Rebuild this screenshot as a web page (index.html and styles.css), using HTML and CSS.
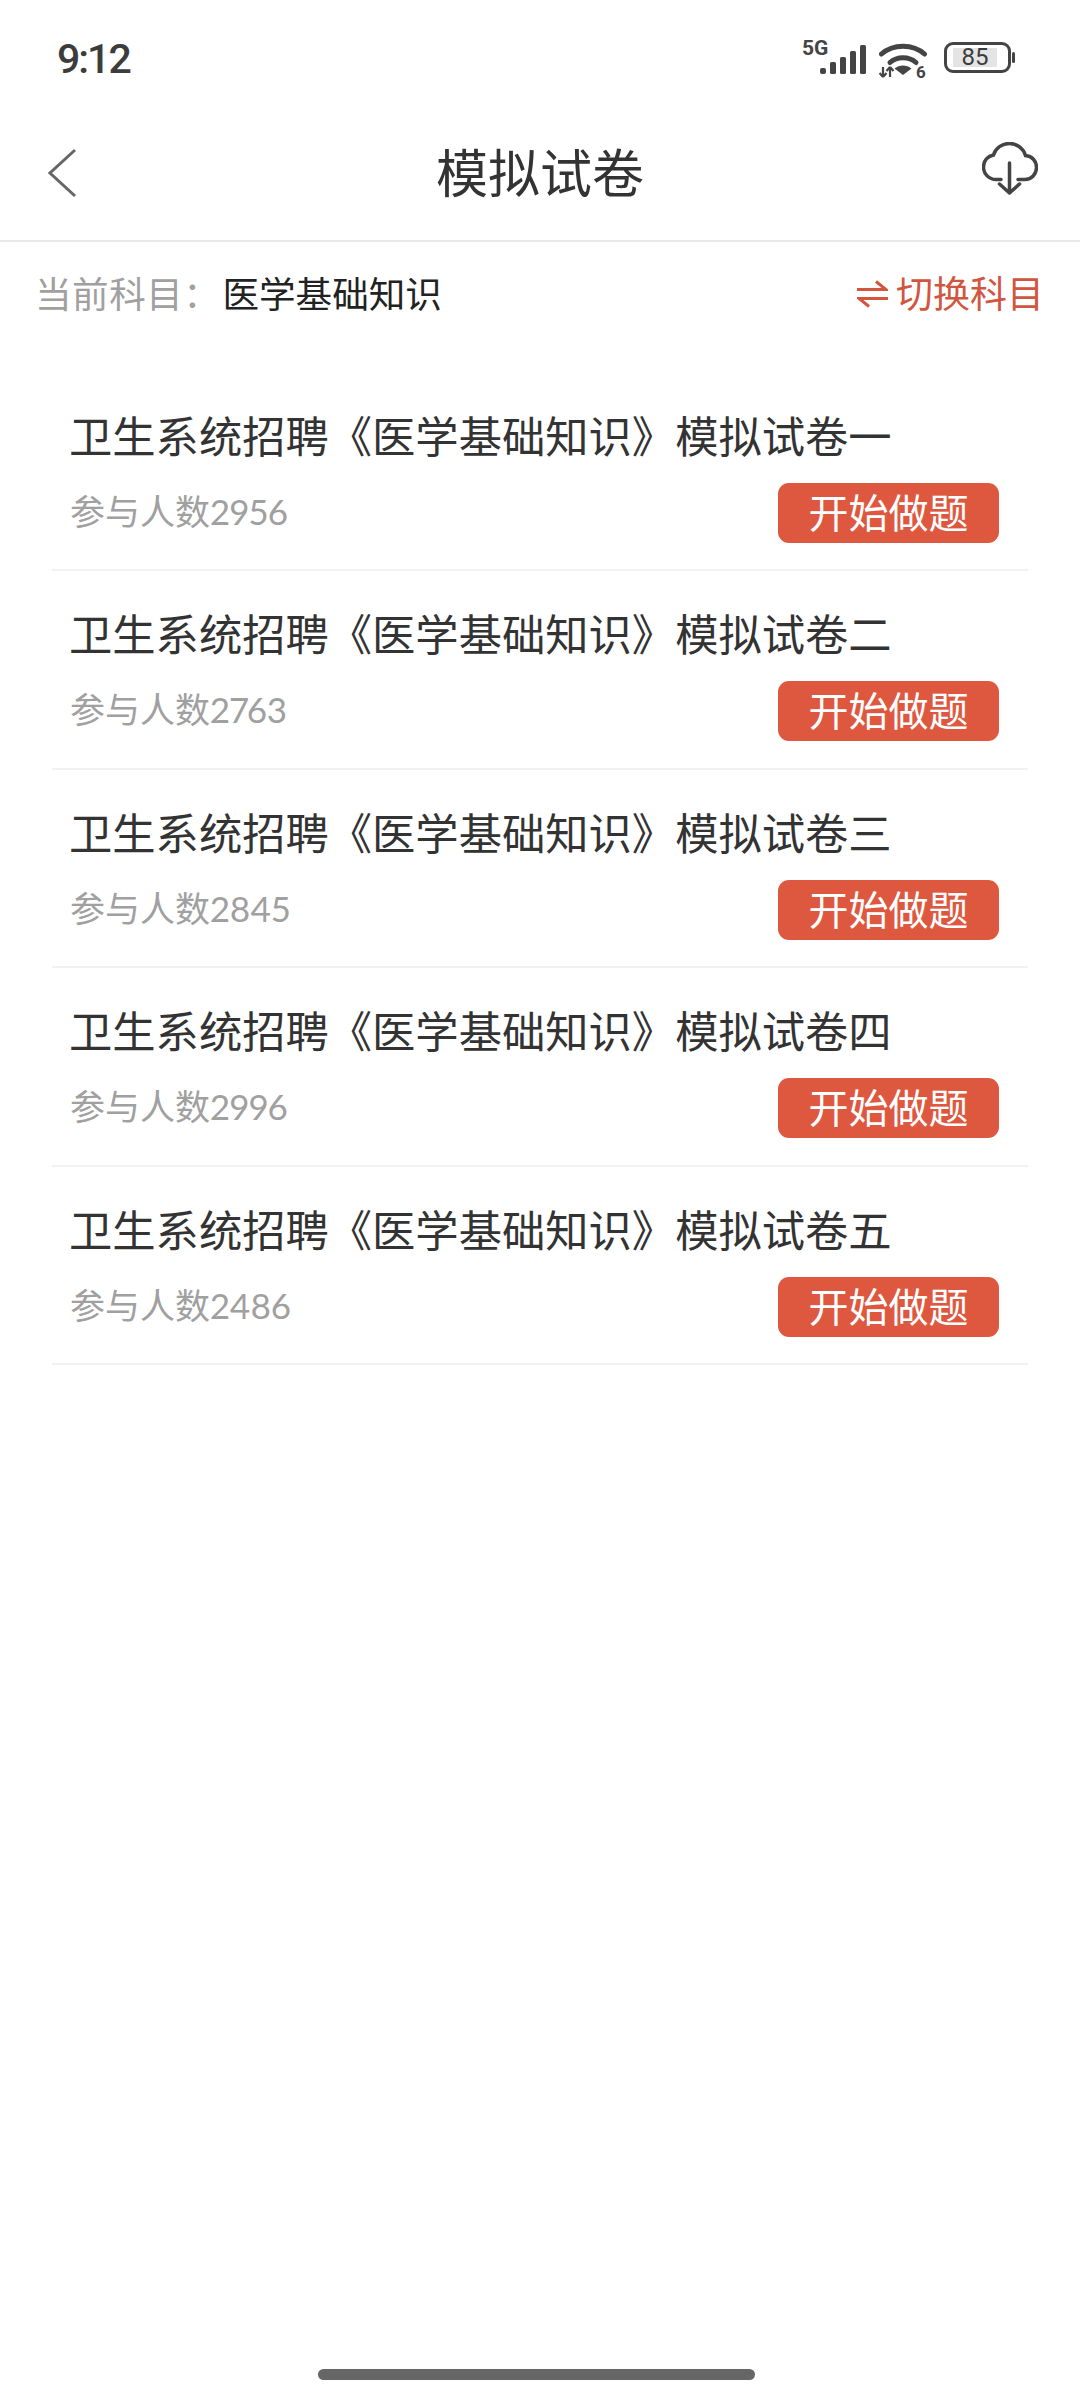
FILE: index.html
```html
<!DOCTYPE html>
<html lang="zh-CN">
<head>
<meta charset="utf-8">
<title>模拟试卷</title>
<link rel="stylesheet" href="styles.css">
</head>
<body>
<div class="page">
  <div class="status">
    <span class="time">9:12</span>
    <div class="status-icons">
      <div class="signal">
        <span class="net">5G</span>
        <svg class="bars" width="46" height="29" viewBox="0 0 46 29"><rect x="0" y="23" width="6" height="6" rx="2"/><rect x="10" y="17" width="6" height="12" rx="1.5"/><rect x="20" y="12" width="6" height="17" rx="1.5"/><rect x="30" y="6" width="6" height="23" rx="1.5"/><rect x="40" y="0" width="6" height="29" rx="1.5"/></svg>
      </div>
      <svg class="wifi" width="50" height="42" viewBox="0 0 50 42"><path d="M2.500 12C14 1.500 34 1.500 45.500 12" fill="none" stroke="#444" stroke-width="5" stroke-linecap="round"/><path d="M11 20.500C18 14 30 14 37 20.500" fill="none" stroke="#444" stroke-width="5" stroke-linecap="round"/><path d="M24 33L15.500 26.500C20.500 22.500 27.500 22.500 32.500 26.500Z" fill="#444"/><path d="M4 25V34M4 35L0.500 31M4 35L7.500 31M11 35V26M11 25L7.500 29M11 25L14.500 29" fill="none" stroke="#444" stroke-width="2.200"/><text x="37" y="36" class="wifi6">6</text></svg>
      <div class="battery">
        <div class="cell"><span class="level">85</span></div>
        <span class="nub"></span>
      </div>
    </div>
  </div>

  <header class="nav">
    <svg class="back" width="30" height="50" viewBox="0 0 30 50"><path d="M27 2L2 25L27 48" fill="none" stroke="#666" stroke-width="3"/></svg>
    <h1 class="nav-title">模拟试卷</h1>
    <svg class="cloud" width="56" height="53" viewBox="0 0 56 53"><path d="M19 37.500H14C7 37.500 1.500 32 1.500 25C1.500 18.500 6 14 11.500 13C13.500 6 20 1.500 27.500 1.500C35 1.500 41.500 6.500 43.500 13.500C50 14 54.500 19 54.500 25.500C54.500 32 49.500 37.500 43 37.500H36" fill="none" stroke="#444" stroke-width="3.500" stroke-linecap="round"/><path d="M27.500 21V50M17.500 42L27.500 51L37.500 42" fill="none" stroke="#444" stroke-width="3.500" stroke-linecap="round" stroke-linejoin="round"/></svg>
  </header>

  <div class="subject">
    <span class="subject-label">当前科目：</span>
    <span class="subject-name">医学基础知识</span>
    <span class="switch">
      <svg class="swap" width="31" height="28" viewBox="0 0 31 28"><path d="M0 9.500H29L19 1.500M31 18.500H2L12 26.500" fill="none" stroke="#d2553f" stroke-width="3"/></svg>
      切换科目
    </span>
  </div>

  <ul class="list">
    <li class="row">
      <div class="row-title">卫生系统招聘《医学基础知识》模拟试卷一</div>
      <div class="row-foot"><span class="count">参与人数2956</span><span class="start">开始做题</span></div>
    </li>
    <li class="row">
      <div class="row-title">卫生系统招聘《医学基础知识》模拟试卷二</div>
      <div class="row-foot"><span class="count">参与人数2763</span><span class="start">开始做题</span></div>
    </li>
    <li class="row">
      <div class="row-title">卫生系统招聘《医学基础知识》模拟试卷三</div>
      <div class="row-foot"><span class="count">参与人数2845</span><span class="start">开始做题</span></div>
    </li>
    <li class="row">
      <div class="row-title">卫生系统招聘《医学基础知识》模拟试卷四</div>
      <div class="row-foot"><span class="count">参与人数2996</span><span class="start">开始做题</span></div>
    </li>
    <li class="row">
      <div class="row-title">卫生系统招聘《医学基础知识》模拟试卷五</div>
      <div class="row-foot"><span class="count">参与人数2486</span><span class="start">开始做题</span></div>
    </li>
  </ul>

  <div class="home"></div>
</div>
</body>
</html>
```
FILE: styles.css
```css
* { box-sizing: border-box; }
html, body { margin: 0; padding: 0; background: #fff; }
body { font-family: Lato, "Noto Sans CJK SC", sans-serif; color: #333; }
.page { width: 1080px; height: 2401px; display: flex; flex-direction: column; overflow: hidden; background: #fff; }

.status { height: 117px; display: flex; align-items: center; justify-content: space-between; padding: 0 65px 0 57px; flex: none; }
.time { font-family: Roboto, sans-serif; font-size: 41px; font-weight: 500; letter-spacing: -2px; color: #3c3c3c; }
.status-icons { display: flex; align-items: flex-start; gap: 12px; height: 36px; margin-top: 2px; }
.signal { position: relative; width: 62px; height: 32px; display: flex; justify-content: flex-end; align-items: flex-end; margin-right: 1px; }
.net { position: absolute; left: -2px; top: -4px; font-family: Roboto, sans-serif; font-size: 21px; line-height: 21px; font-weight: 700; color: #444; }
.bars rect { fill: #444; }
.wifi { margin-right: -2px; }
.wifi6 { font-family: Roboto, sans-serif; font-size: 17px; font-weight: 700; fill: #444; }
.battery { display: flex; align-items: center; gap: 1px; height: 32px; margin-left: 5px; }
.cell { width: 67px; height: 31px; border: 3px solid #444; border-radius: 9px; padding: 3px 0 3px 6px; display: flex; }
.level { width: 44px; background: #e4e4e4; font-family: Roboto, sans-serif; font-size: 24px; line-height: 19px; text-align: center; color: #3c3c3c; }
.nub { width: 3px; height: 11px; background: #444; border-radius: 2px; }

.nav { height: 125px; display: flex; align-items: center; justify-content: space-between; padding: 0 42px 12px 48px; border-bottom: 2px solid #e8e8e8; position: relative; flex: none; }
.nav-title { position: absolute; left: 0; right: 0; margin: 0; text-align: center; font-size: 52px; line-height: 70px; font-weight: 400; color: #333; }
.cloud { margin-bottom: 8px; }

.subject { height: 131px; padding: 19px 36px 0 35px; display: flex; align-items: flex-start; font-size: 36.600px; line-height: 66px; flex: none; }
.subject-label { color: #a0a0a0; letter-spacing: 0.500px; margin-right: 2px; }
.subject-name { color: #222; }
.switch { margin-left: auto; display: flex; align-items: center; gap: 8px; font-size: 37px; color: #d2553f; }

.list { list-style: none; margin: 0; padding: 0 52px; flex: none; }
.row { height: 198.400px; padding: 35px 29px 0 17px; border-bottom: 2px solid #f2f2f2; }
.row-title { font-size: 43.300px; line-height: 56px; color: #333; white-space: nowrap; }
.row-foot { display: flex; align-items: center; justify-content: space-between; margin-top: 19px; padding-left: 1px; }
.count { font-size: 35px; line-height: 50px; margin-bottom: 4px; color: #a0a0a0; font-variant-numeric: proportional-nums; }
.start { width: 221px; height: 60px; border-radius: 11px; background: #de5840; color: #fff; font-size: 40px; line-height: 60px; text-align: center; }

.home { width: 437px; height: 11px; border-radius: 6px; background: #666; margin: auto 325px 21px 318px; flex: none; }
```
